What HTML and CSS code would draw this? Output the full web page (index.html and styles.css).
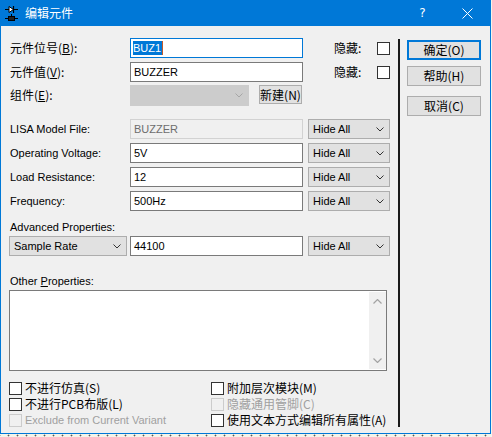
FILE: index.html
```html
<!DOCTYPE html>
<html>
<head>
<meta charset="utf-8">
<link rel="stylesheet" href="styles.css">
</head>
<body>
<div class="window">
  <div class="titlebar">
    <svg class="tb-icon" width="13" height="16" viewBox="0 0 13 16">
      <path d="M0 3.5H13" stroke="#000" stroke-width="1"/>
      <path d="M4 0.5L8.5 3.5L4 6.5Z" fill="#fff" stroke="#000" stroke-width="1"/>
      <path d="M8.5 0V7" stroke="#000" stroke-width="1.2"/>
      <path d="M6.5 8V11" stroke="#000" stroke-width="1"/>
      <rect x="3.5" y="10.5" width="6" height="4" fill="#222" stroke="#000" stroke-width="1"/>
      <path d="M0 12.5H3.5M9.5 12.5H13" stroke="#000" stroke-width="1"/>
    </svg>
    <span class="tb-title">编辑元件</span>
    <span class="tb-btn tb-help">?</span>
    <span class="tb-btn">
      <svg width="11" height="11" viewBox="0 0 11 11"><path d="M0.5 0.5L10.5 10.5M10.5 0.5L0.5 10.5" stroke="#fff" stroke-width="1"/></svg>
    </span>
  </div>
  <div class="client">
    <div class="main">
      <div class="row">
        <span class="lbl zh">元件位号(<u>B</u>):</span>
        <div class="field focus"><span class="sel">BUZ1</span><span class="caret"></span></div>
        <div class="hide"><span class="zh hide-lbl">隐藏:</span><span class="cb"></span></div>
      </div>
      <div class="row r2">
        <span class="lbl zh">元件值(<u>V</u>):</span>
        <div class="field">BUZZER</div>
        <div class="hide"><span class="zh hide-lbl">隐藏:</span><span class="cb"></span></div>
      </div>
      <div class="row r3">
        <span class="lbl zh">组件(<u>E</u>):</span>
        <div class="combo dis-combo">
          <span></span>
          <svg width="8" height="5" viewBox="0 0 8 5"><path d="M0.5 0.5L4 4L7.5 0.5" fill="none" stroke="#a6a6a6" stroke-width="1"/></svg>
        </div>
        <div class="btn-new zh">新建(N)</div>
      </div>
      <div class="row r4">
        <span class="lbl">LISA Model File:</span>
        <div class="field dis">BUZZER</div>
        <div class="combo hideall"><span>Hide All</span><svg width="8" height="5" viewBox="0 0 8 5"><path d="M0.5 0.5L4 4L7.5 0.5" fill="none" stroke="#333" stroke-width="1"/></svg></div>
      </div>
      <div class="row r5">
        <span class="lbl">Operating Voltage:</span>
        <div class="field">5V</div>
        <div class="combo hideall"><span>Hide All</span><svg width="8" height="5" viewBox="0 0 8 5"><path d="M0.5 0.5L4 4L7.5 0.5" fill="none" stroke="#333" stroke-width="1"/></svg></div>
      </div>
      <div class="row r5">
        <span class="lbl">Load Resistance:</span>
        <div class="field">12</div>
        <div class="combo hideall"><span>Hide All</span><svg width="8" height="5" viewBox="0 0 8 5"><path d="M0.5 0.5L4 4L7.5 0.5" fill="none" stroke="#333" stroke-width="1"/></svg></div>
      </div>
      <div class="row r5">
        <span class="lbl">Frequency:</span>
        <div class="field">500Hz</div>
        <div class="combo hideall"><span>Hide All</span><svg width="8" height="5" viewBox="0 0 8 5"><path d="M0.5 0.5L4 4L7.5 0.5" fill="none" stroke="#333" stroke-width="1"/></svg></div>
      </div>
      <div class="sect adv">Advanced Properties:</div>
      <div class="row r6">
        <div class="combo samp"><span>Sample Rate</span><svg width="8" height="5" viewBox="0 0 8 5"><path d="M0.5 0.5L4 4L7.5 0.5" fill="none" stroke="#333" stroke-width="1"/></svg></div>
        <div class="field">44100</div>
        <div class="combo hideall"><span>Hide All</span><svg width="8" height="5" viewBox="0 0 8 5"><path d="M0.5 0.5L4 4L7.5 0.5" fill="none" stroke="#333" stroke-width="1"/></svg></div>
      </div>
      <div class="sect other">Other <u>P</u>roperties:</div>
      <div class="textarea">
        <div class="ta-body"></div>
        <div class="scroll">
          <svg width="9" height="5" viewBox="0 0 9 5"><path d="M0.5 4.5L4.5 0.5L8.5 4.5" fill="none" stroke="#a3a3a3" stroke-width="1.2"/></svg>
          <svg width="9" height="5" viewBox="0 0 9 5"><path d="M0.5 0.5L4.5 4.5L8.5 0.5" fill="none" stroke="#a3a3a3" stroke-width="1.2"/></svg>
        </div>
      </div>
      <div class="checks">
        <div class="chk"><span class="cb"></span><span class="zh">不进行仿真(S)</span></div>
        <div class="chk"><span class="cb"></span><span class="zh">附加层次模块(M)</span></div>
        <div class="chk"><span class="cb"></span><span class="zh">不进行PCB布版(L)</span></div>
        <div class="chk disabled"><span class="cb"></span><span class="zh">隐藏通用管脚(C)</span></div>
        <div class="chk disabled"><span class="cb"></span><span>Exclude from Current Variant</span></div>
        <div class="chk"><span class="cb"></span><span class="zh">使用文本方式编辑所有属性(A)</span></div>
      </div>
    </div>
    <div class="sep"></div>
    <div class="side">
      <div class="btn default zh">确定(O)</div>
      <div class="btn help zh">帮助(H)</div>
      <div class="btn cancel zh">取消(C)</div>
    </div>
  </div>
</div>
<div class="desk"></div>
</body>
</html>
```
FILE: styles.css
```css
* { box-sizing: border-box; }
html, body { margin: 0; padding: 0; }
body {
  width: 492px;
  height: 437px;
  overflow: hidden;
  background: #f4f4ea;
  font-family: "Liberation Sans", "Noto Sans CJK SC", sans-serif;
  font-size: 11px;
  color: #000;
}
u { text-underline-offset: 1px; }
.zh {
  font-family: "Noto Sans CJK SC", "Liberation Sans", sans-serif;
  font-size: 12px;
}
.window {
  width: 491px;
  height: 434px;
  border: 1px solid #0078d7;
  border-top: 0;
  background: #f0f0f0;
  display: flex;
  flex-direction: column;
}
.titlebar {
  height: 26px;
  flex: none;
  background: #0078d7;
  display: flex;
  align-items: center;
  color: #fff;
}
.tb-icon { margin-left: 4px; margin-top: 2px; flex: none; }
.tb-title {
  margin-left: 7px;
  font-family: "Noto Sans CJK SC", sans-serif;
  font-size: 12px;
  line-height: 14px;
}
.tb-btn {
  width: 45px;
  height: 26px;
  display: flex;
  align-items: center;
  justify-content: center;
  flex: none;
}
.tb-help {
  margin-left: auto;
  font-family: "DejaVu Sans", sans-serif;
  font-size: 12px;
}
.client {
  flex: 1;
  display: flex;
}
.main {
  width: 397px;
  flex: none;
  padding: 12px 0 0 8px;
}
.row {
  display: flex;
  align-items: flex-start;
  height: 20px;
}
.r2 { margin-top: 4px; }
.r3 { margin-top: 3px; height: 21px; }
.r4 { margin-top: 13px; }
.r5 { margin-top: 4px; }
.r6 { margin-top: 2px; }
.lbl {
  width: 121px;
  padding-left: 1px;
  line-height: 20px;
  flex: none;
  white-space: nowrap;
}
.field {
  width: 173px;
  height: 20px;
  flex: none;
  border: 1px solid #7a7a7a;
  background: #fff;
  padding-left: 3px;
  line-height: 18px;
  white-space: nowrap;
  display: flex;
  align-items: center;
}
.field.focus { border-color: #0078d7; }
.field.dis { border-color: #d2d2d2; background: #f0f0f0; color: #6d6d6d; }
.sel {
  background: #0078d7;
  color: #fff;
  line-height: 14px;
  padding: 0 1px 0 0;
  margin-left: -1px;
}
.caret { width: 1px; height: 14px; background: #c45a2a; margin-left: 0; }
.hide {
  margin-left: 31px;
  height: 20px;
  display: flex;
  align-items: center;
}
.hide-lbl { width: 43px; line-height: 16px; }
.cb {
  width: 13px;
  height: 13px;
  flex: none;
  border: 1px solid #333;
  background: #fff;
  display: inline-block;
}
.combo {
  height: 20px;
  flex: none;
  display: flex;
  align-items: center;
  justify-content: space-between;
  border: 1px solid #adadad;
  background: #e1e1e1;
  padding: 0 5px 0 4px;
  white-space: nowrap;
}
.hideall { width: 82px; margin-left: 5px; }
.samp { width: 118px; margin-right: 3px; }
.dis-combo {
  width: 119px;
  height: 21px;
  background: #cccccc;
  border-color: #cccccc;
}
.btn-new {
  margin-left: 10px;
  width: 43px;
  height: 19px;
  border: 1px solid #adadad;
  background: #e1e1e1;
  display: flex;
  align-items: center;
  justify-content: center;
  line-height: 14px;
  white-space: nowrap;
}
.sect {
  height: 14px;
  line-height: 14px;
  padding-left: 1px;
  white-space: nowrap;
}
.adv { margin-top: 9px; }
.other { margin-top: 18px; }
.textarea {
  margin-top: 2px;
  width: 378px;
  height: 81px;
  border: 1px solid #7a7a7a;
  background: #fff;
  display: flex;
  padding: 1px 0 1px 0;
}
.ta-body { flex: 1; }
.scroll {
  width: 17px;
  background: #f0f0f0;
  display: flex;
  flex-direction: column;
  align-items: center;
  justify-content: space-between;
  padding: 7px 0 6px;
}
.checks {
  margin-top: 9px;
  display: grid;
  grid-template-columns: 202px auto;
  grid-auto-rows: 16px;
}
.chk {
  display: flex;
  align-items: center;
  gap: 3px;
  white-space: nowrap;
  line-height: 14px;
}
.chk.disabled { color: #a0a0a0; }
.chk.disabled .cb { border-color: #cccccc; background: #f0f0f0; }
.sep {
  width: 2px;
  height: 388px;
  margin-top: 13px;
  background: #1a1a1a;
  flex: none;
}
.side {
  flex: 1;
  padding: 14px 0 0 7px;
}
.btn {
  width: 74px;
  height: 20px;
  border: 1px solid #adadad;
  background: #e1e1e1;
  display: flex;
  align-items: center;
  justify-content: center;
  line-height: 14px;
}
.btn.default { border: 2px solid #0078d7; }
.btn.help { margin-top: 6px; }
.btn.cancel { margin-top: 10px; }
.desk {
  height: 3px;
  background-color: #f4f4ea;
  background-image: radial-gradient(circle, #555 0.8px, transparent 1.1px);
  background-size: 9px 3px;
  background-position: 4px 0;
}
```
